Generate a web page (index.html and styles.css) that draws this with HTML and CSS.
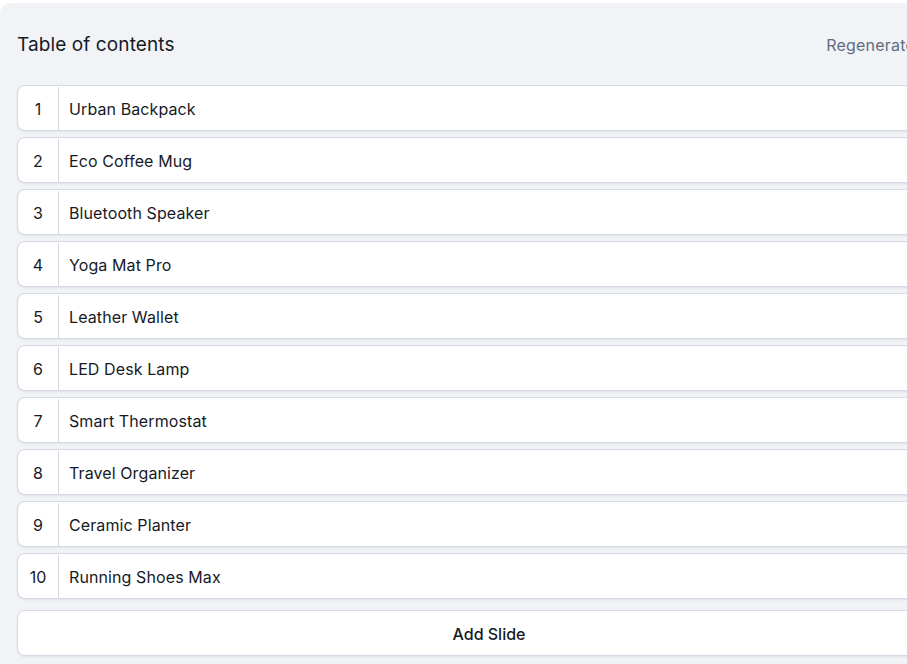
FILE: index.html
```html
<!DOCTYPE html>
<html lang="en">
<head>
    <meta charset="UTF-8">
    <meta name="viewport" content="width=device-width, initial-scale=1.0">
    <title>Table of contents</title>
    <link rel="stylesheet" href="styles.css">
</head>
<body>

    <div class="panel">
        <header class="panel-header">
            <h2>Table of contents</h2>
            <button class="regen-btn">Regenerate</button>
        </header>

        <ul class="slide-list">
            <li class="slide"><span class="slide-num">1</span><span class="slide-title">Urban Backpack</span></li>
            <li class="slide"><span class="slide-num">2</span><span class="slide-title">Eco Coffee Mug</span></li>
            <li class="slide"><span class="slide-num">3</span><span class="slide-title">Bluetooth Speaker</span></li>
            <li class="slide"><span class="slide-num">4</span><span class="slide-title">Yoga Mat Pro</span></li>
            <li class="slide"><span class="slide-num">5</span><span class="slide-title">Leather Wallet</span></li>
            <li class="slide"><span class="slide-num">6</span><span class="slide-title">LED Desk Lamp</span></li>
            <li class="slide"><span class="slide-num">7</span><span class="slide-title">Smart Thermostat</span></li>
            <li class="slide"><span class="slide-num">8</span><span class="slide-title">Travel Organizer</span></li>
            <li class="slide"><span class="slide-num">9</span><span class="slide-title">Ceramic Planter</span></li>
            <li class="slide"><span class="slide-num">10</span><span class="slide-title">Running Shoes Max</span></li>
        </ul>

        <button class="add-btn">Add Slide</button>
    </div>

</body>
</html>
```

FILE: styles.css
```css
* {
    margin: 0;
    padding: 0;
    box-sizing: border-box;
}

body {
    font-family: 'Inter', 'Noto Sans', sans-serif;
    background: #fff;
    color: #161a26;
    padding-top: 3px;
    overflow: hidden;
}

.panel {
    width: 978px;
    background: #f2f3f7;
    border-radius: 10px;
    padding: 17px 17px 20px;
}

.panel-header {
    height: 48px;
    display: flex;
    justify-content: space-between;
    align-items: center;
    margin-bottom: 17px;
}

.panel-header h2 {
    font-size: 19px;
    font-weight: 400;
    letter-spacing: 0.1px;
}

.regen-btn {
    font-family: inherit;
    font-size: 16px;
    letter-spacing: 0.2px;
    color: #616c7e;
    background: none;
    border: none;
    padding: 0 46px 0 0;
    margin-top: 2px;
}

.slide-list {
    list-style: none;
    display: flex;
    flex-direction: column;
    gap: 6px;
}

.slide {
    height: 46px;
    display: flex;
    align-items: center;
    padding-top: 1px;
    background: #fff;
    border: 1px solid #d5dae4;
    border-radius: 8px;
    box-shadow: 0 1px 2px rgba(16, 24, 40, 0.08);
    font-size: 16px;
}

.slide-num {
    width: 41px;
    height: 100%;
    display: flex;
    align-items: center;
    justify-content: center;
    border-right: 1px solid #d5dae4;
}

.slide-title {
    padding-left: 10px;
    letter-spacing: 0.1px;
}

.add-btn {
    display: block;
    width: 100%;
    height: 46px;
    margin-top: 11px;
    padding-top: 1px;
    font-family: inherit;
    font-size: 16px;
    font-weight: 500;
    color: #161a26;
    background: #fff;
    border: 1px solid #d5dae4;
    border-radius: 8px;
    box-shadow: 0 1px 2px rgba(16, 24, 40, 0.08);
}
```
